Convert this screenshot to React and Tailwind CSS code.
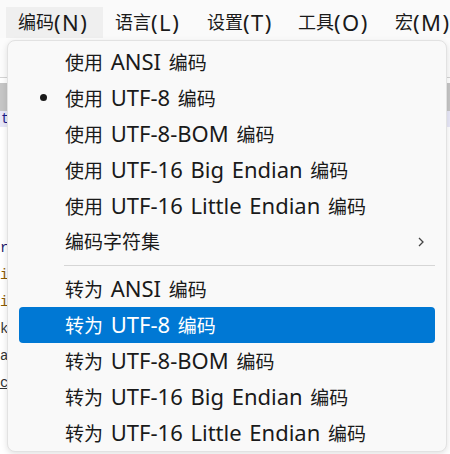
import React from 'react';

const FONT = { fontFamily: '"Noto Sans", "Noto Sans CJK SC", sans-serif' };
const MONO = { fontFamily: '"Liberation Mono", monospace' };

// 中文与拉丁字符分开排版，拉丁字母略大
const Mixed = ({ text, cjk, latin }) =>
  text.split(/([\u4e00-\u9fff]+)/).filter(Boolean).map((part, i) =>
    /[\u4e00-\u9fff]/.test(part) ? (
      <span key={i} className={cjk}>{part}</span>
    ) : (
      <span key={i} className={latin}>{part}</span>
    )
  );

const topItems = [
  { label: '编码(N)', cls: 'ml-[6px] pl-[12px] w-[97px] bg-[#efefef]' },
  { label: '语言(L)', cls: 'pl-[12px] w-[104px]' },
  { label: '设置(T)', cls: 'w-[91px]' },
  { label: '工具(O)', cls: 'w-[97px]' },
  { label: '宏(M)', cls: '' },
];

const useItems = [
  { label: '使用 ANSI 编码' },
  { label: '使用 UTF-8 编码', checked: true },
  { label: '使用 UTF-8-BOM 编码' },
  { label: '使用 UTF-16 Big Endian 编码' },
  { label: '使用 UTF-16 Little Endian 编码' },
  { label: '编码字符集', sub: true },
];

const convertItems = [
  { label: '转为 ANSI 编码' },
  { label: '转为 UTF-8 编码', active: true },
  { label: '转为 UTF-8-BOM 编码' },
  { label: '转为 UTF-16 Big Endian 编码' },
  { label: '转为 UTF-16 Little Endian 编码' },
];

const MenuItem = ({ item }) => (
  <div
    className={`relative h-[36px] mx-[11px] px-[46px] flex items-center rounded-[4px] ${
      item.active ? 'bg-[#0078d4] text-white' : 'text-[#1a1a1a]'
    }`}
  >
    {item.checked && (
      <span className="absolute left-[21px] top-[14px] w-[7px] h-[7px] rounded-full bg-[#1a1a1a]" />
    )}
    <span className="whitespace-nowrap leading-[36px] [word-spacing:2px]">
      <Mixed text={item.label} cjk="text-[19px]" latin="text-[22px]" />
    </span>
    {item.sub && (
      <svg className="absolute right-[11px] top-[13px]" width="6" height="10" viewBox="0 0 6 10">
        <path d="M1 1 L5 5 L1 9" fill="none" stroke="#444" strokeWidth="1.3" />
      </svg>
    )}
  </div>
);

export default function App() {
  return (
    <div className="relative w-[450px] h-[454px] overflow-hidden bg-white" style={FONT}>
      {/* 菜单栏 */}
      <div className="h-[38px] bg-[#fafafa] flex items-end text-[#1a1a1a]">
        {topItems.map((t) => (
          <div key={t.label} className={`h-[31px] flex items-center whitespace-nowrap shrink-0 ${t.cls}`}>
            <Mixed text={t.label} cjk="text-[18px]" latin="text-[22px] tracking-[1.5px]" />
          </div>
        ))}
      </div>

      {/* 背后的编辑器 */}
      <div className="h-[40px] bg-[#fcfcfc] border-b border-[#d4d4d4]" />
      <div className="h-[5px] bg-white" />
      <div className="h-[28px] bg-[#c6c6c6]" />
      <div className="h-[16px] bg-[#e8e8f8] text-[14px] leading-[16px] text-[#1a1a8a] pl-[1px]" style={MONO}>t</div>
      <div className="pt-[108px] text-[14px] leading-[27px]" style={MONO}>
        <div className="text-[#1a1a6a]">r</div>
        <div className="text-[#8a5a00]">i</div>
        <div className="text-[#8a5a00]">i</div>
        <div className="text-[#333]">k</div>
        <div className="text-[#333]">a</div>
        <div className="text-[#333] underline">c</div>
      </div>

      {/* 编码下拉菜单 */}
      <div className="absolute left-[7px] top-[40px] w-[440px] h-[412px] bg-[#f9f9f9] border border-[#e2e2e2] rounded-[8px] shadow-[0_2px_6px_rgba(0,0,0,0.12)] pt-[3px]">
        {useItems.map((it) => (
          <MenuItem key={it.label} item={it} />
        ))}
        <div className="ml-[56px] mr-[11px] my-[5px] h-px bg-[#d6d6d6]" />
        {convertItems.map((it) => (
          <MenuItem key={it.label} item={it} />
        ))}
      </div>
    </div>
  );
}
